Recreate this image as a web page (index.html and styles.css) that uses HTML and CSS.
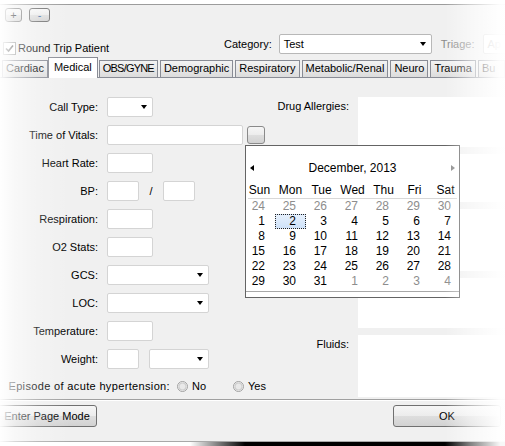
FILE: index.html
```html
<!DOCTYPE html>
<html lang="en">
<head>
    <meta charset="UTF-8">
    <meta name="viewport" content="width=device-width, initial-scale=1.0">
    <title>Medical</title>
    <link rel="stylesheet" href="styles.css">
</head>
<body>
    <div class="screen">
        <div class="window">
            <div class="toolbar">
                <button class="btn btn-plus">+</button>
                <button class="btn btn-minus">-</button>
            </div>

            <div class="header">
                <div class="roundtrip">
                    <span class="check">
                        <svg width="9" height="9" viewBox="0 0 9 9"><path d="M1 4.5 L3.5 7 L8 1.5" fill="none" stroke="#333" stroke-width="1.6"/></svg>
                    </span>
                    Round Trip Patient
                </div>
                <span class="lbl-cat">Category:</span>
                <div class="select select-cat">Test<span class="arrow"></span></div>
                <span class="lbl-triage">Triage:</span>
                <div class="select select-triage">Ap</div>
            </div>

            <div class="tabs">
                <div class="tab">Cardiac</div>
                <div class="tab active">Medical</div>
                <div class="tab tab-caps">OBS/GYNE</div>
                <div class="tab">Demographic</div>
                <div class="tab">Respiratory</div>
                <div class="tab">Metabolic/Renal</div>
                <div class="tab">Neuro</div>
                <div class="tab">Trauma</div>
                <div class="tab tab-last">Bu</div>
            </div>

            <div class="panel">
                <div class="form">
                    <span class="label">Call Type:</span>
                    <div class="select w46"><span class="arrow"></span></div>

                    <span class="label">Time of Vitals:</span>
                    <div class="pair">
                        <div class="field w136"></div>
                        <button class="btn btn-drop"></button>
                    </div>

                    <span class="label">Heart Rate:</span>
                    <div class="field w46"></div>

                    <span class="label">BP:</span>
                    <div class="pair">
                        <div class="field w32"></div>
                        <span class="slash">/</span>
                        <div class="field w32"></div>
                    </div>

                    <span class="label">Respiration:</span>
                    <div class="field w46"></div>

                    <span class="label">O2 Stats:</span>
                    <div class="field w46"></div>

                    <span class="label">GCS:</span>
                    <div class="select w102"><span class="arrow"></span></div>

                    <span class="label">LOC:</span>
                    <div class="select w102"><span class="arrow"></span></div>

                    <span class="label">Temperature:</span>
                    <div class="field w46"></div>

                    <span class="label">Weight:</span>
                    <div class="pair pair-weight">
                        <div class="field w32"></div>
                        <div class="select w60"><span class="arrow"></span></div>
                    </div>

                    <div class="episode">
                        <span class="episode-label">Episode of acute hypertension:</span>
                        <label class="opt"><span class="radio"></span>No</label>
                        <label class="opt"><span class="radio"></span>Yes</label>
                    </div>
                </div>

                <div class="notes">
                    <div class="note-row">
                        <span class="note-label">Drug Allergies:</span>
                        <div class="note-box h50"></div>
                    </div>
                    <div class="note-row">
                        <span class="note-label"></span>
                        <div class="note-box h48"></div>
                    </div>
                    <div class="note-row">
                        <span class="note-label"></span>
                        <div class="note-box h62"></div>
                    </div>
                    <div class="note-row">
                        <span class="note-label"></span>
                        <div class="note-box h50"></div>
                    </div>
                    <div class="note-row">
                        <span class="note-label">Fluids:</span>
                        <div class="note-box h62"></div>
                    </div>
                </div>
            </div>

            <div class="footer">
                <button class="btn btn-page">Enter Page Mode</button>
                <button class="btn btn-ok">OK</button>
            </div>
        </div>
        <div class="taskbar"></div>

        <!-- date picker dropped from Time of Vitals -->
        <div class="calendar">
            <div class="cal-head">
                <span class="cal-prev"></span>
                <span class="cal-title">December, 2013</span>
                <span class="cal-next"></span>
            </div>
            <div class="cal-grid cal-days">
                <span>Sun</span><span>Mon</span><span>Tue</span><span>Wed</span><span>Thu</span><span>Fri</span><span>Sat</span>
            </div>
            <div class="cal-rule"></div>
            <div class="cal-grid cal-dates">
                <span class="other">24</span><span class="other">25</span><span class="other">26</span><span class="other">27</span><span class="other">28</span><span class="other">29</span><span class="other">30</span>
                <span>1</span><span class="today">2</span><span>3</span><span>4</span><span>5</span><span>6</span><span>7</span>
                <span>8</span><span>9</span><span>10</span><span>11</span><span>12</span><span>13</span><span>14</span>
                <span>15</span><span>16</span><span>17</span><span>18</span><span>19</span><span>20</span><span>21</span>
                <span>22</span><span>23</span><span>24</span><span>25</span><span>26</span><span>27</span><span>28</span>
                <span>29</span><span>30</span><span>31</span><span class="other">1</span><span class="other">2</span><span class="other">3</span><span class="other">4</span>
            </div>
            <div class="cal-foot"></div>
        </div>

        <div class="fade fade-left"></div>
        <div class="fade fade-right"></div>
    </div>
</body>
</html>
```

FILE: styles.css
```css
*{
    margin: 0;
    padding: 0;
    box-sizing: border-box;
    font-family: "Liberation Sans", Arial, sans-serif;
}
body{
    background: #fff;
}
.screen{
    position: relative;
    width: 505px;
    height: 446px;
    overflow: hidden;
    font-size: 11px;
    color: #000;
}
.window{
    margin-top: 4px;
    height: 438px;
    display: flex;
    flex-direction: column;
    background: #f0f0f0;
    border-top: 1px solid #9c9c9c;
    border-bottom: 1px solid #a8a8a8;
}

/* buttons */
.btn{
    border: 1px solid #707070;
    border-radius: 3px;
    background: linear-gradient(#f6f6f6 0%, #ececec 50%, #dedede 51%, #d2d2d2 100%);
    font-size: 11px;
    color: #000;
}
.toolbar{
    display: flex;
    gap: 7px;
    padding: 3px 0 0 5px;
}
.btn-plus{
    width: 17px;
    height: 14px;
    line-height: 11px;
}
.btn-minus{
    width: 21px;
    height: 14px;
    line-height: 10px;
    color: #3d6fa8;
}

/* header */
.header{
    display: flex;
    align-items: center;
    height: 20px;
    margin-top: 12px;
}
.header > *{
    flex-shrink: 0;
}
.roundtrip{
    width: 221px;
    margin-left: 3px;
    display: flex;
    align-items: center;
    gap: 2px;
    padding-top: 8px;
}
.check{
    width: 13px;
    height: 13px;
    border: 1px solid #8e8f8f;
    background: #fff;
    display: flex;
    align-items: center;
    justify-content: center;
}
.lbl-cat{
    margin-right: 7px;
}
.lbl-triage{
    margin-left: 9px;
    margin-right: 8px;
    color: #8a8a8a;
}
.select{
    height: 20px;
    background: #fff;
    border: 1px solid #d4d4d4;
    border-radius: 2px;
    display: flex;
    align-items: center;
    justify-content: flex-end;
    padding-right: 5px;
}
.arrow{
    width: 0;
    height: 0;
    border-left: 3.5px solid transparent;
    border-right: 3.5px solid transparent;
    border-top: 4px solid #000;
}
.select-cat{
    width: 153px;
    justify-content: space-between;
    padding: 0 5px 0 4px;
    border-color: #b8b8b8;
}
.select-triage{
    width: 80px;
    justify-content: flex-start;
    padding-left: 4px;
    color: #aaa;
}

/* tabs */
.tabs{
    display: flex;
    align-items: flex-end;
    height: 21px;
    margin-top: 3px;
    padding-left: 2px;
    border-bottom: 1px solid #898c95;
}
.tab{
    height: 17px;
    line-height: 15px;
    padding: 0 3px;
    margin-right: 2px;
    border: 1px solid #898c95;
    border-bottom: none;
    background: linear-gradient(#f3f3f3, #dcdcdc);
    white-space: nowrap;
}
.tab:first-child{
    margin-right: 0;
}
.tab.active{
    height: 21px;
    line-height: 18px;
    padding: 0 5px;
    margin-right: 1px;
    margin-bottom: -1px;
    background: #fff;
}
.tab-caps{
    letter-spacing: -0.8px;
}
.tab-last{
    flex: 1;
    margin-right: 0;
}

/* tab page */
.panel{
    flex: 1;
    display: flex;
    padding-top: 19px;
}
.form{
    width: 270px;
    display: grid;
    grid-template-columns: 98px auto;
    column-gap: 9px;
    row-gap: 8px;
    align-items: center;
    align-content: start;
}
.label{
    text-align: right;
    white-space: nowrap;
}
.field{
    height: 20px;
    background: #fff;
    border: 1px solid #d4d4d4;
    border-radius: 2px;
}
.w32{ width: 32px; }
.w46{ width: 46px; }
.w60{ width: 60px; }
.w102{ width: 102px; }
.w136{ width: 136px; }
.pair{
    display: flex;
    align-items: center;
}
.btn-drop{
    width: 18px;
    height: 18px;
    margin-left: 4px;
    border-color: #8a8a8a;
}
.slash{
    width: 24px;
    text-align: center;
}
.pair-weight{
    gap: 10px;
}
.episode{
    grid-column: 1 / -1;
    display: flex;
    align-items: center;
    height: 18px;
}
.episode-label{
    width: 170px;
    text-align: right;
    white-space: nowrap;
    letter-spacing: 0.35px;
}
.opt{
    width: 56px;
    display: flex;
    align-items: center;
    gap: 4px;
}
.episode-label + .opt{
    margin-left: 7px;
}
.radio{
    width: 11px;
    height: 11px;
    border-radius: 50%;
    border: 1px solid #a2a2a2;
    background: radial-gradient(circle, #e9e9e9 0 2.5px, #c9c9c9 3.5px, #f5f5f5 4.5px);
}
.notes{
    flex: 1;
    display: flex;
    flex-direction: column;
    gap: 7px;
}
.note-row{
    display: flex;
    gap: 9px;
}
.note-label{
    width: 79px;
    flex-shrink: 0;
    text-align: right;
    padding-top: 3px;
    white-space: nowrap;
}
.note-box{
    flex: 1;
    background: #fff;
}
.h48{ height: 48px; }
.h50{ height: 50px; }
.h62{ height: 62px; }

/* bottom buttons */
.footer{
    height: 42px;
    display: flex;
    justify-content: space-between;
    align-items: flex-start;
    padding: 5px 4px 0 0;
    border-top: 1px solid #a0a0a0;
    box-shadow: inset 0 1px #fff;
}
.btn-page{
    width: 100px;
    height: 22px;
    margin-left: -3px;
}
.btn-ok{
    width: 108px;
    height: 22px;
}
.taskbar{
    height: 4px;
    background: linear-gradient(to right, rgba(0,0,0,0) 190px, #000 245px);
}

/* date picker */
.calendar{
    position: absolute;
    left: 245px;
    top: 145px;
    width: 215px;
    height: 153px;
    background: #fff;
    border: 1px solid #646464;
    font-size: 12px;
    z-index: 2;
}
.cal-head{
    display: flex;
    align-items: center;
    justify-content: space-between;
    height: 18px;
    margin-top: 13px;
    padding: 0 4px;
}
.cal-prev{
    width: 0;
    height: 0;
    border-top: 3.5px solid transparent;
    border-bottom: 3.5px solid transparent;
    border-right: 4px solid #000;
}
.cal-next{
    width: 0;
    height: 0;
    border-top: 3.5px solid transparent;
    border-bottom: 3.5px solid transparent;
    border-left: 4px solid #8a8a8a;
}
.cal-grid{
    display: grid;
    grid-template-columns: repeat(7, 31px);
    margin-left: -2px;
}
.cal-days{
    margin-top: 6px;
    height: 15px;
    line-height: 15px;
    text-align: center;
}
.cal-rule{
    height: 1px;
    margin: 0 2px;
    background: #d8d8d8;
}
.cal-dates span{
    height: 15px;
    line-height: 15px;
    text-align: right;
    padding-right: 10px;
}
.cal-dates .other{
    color: #8d8d8d;
}
.cal-dates .today{
    line-height: 13px;
    padding-right: 9px;
    background: linear-gradient(#e6f0fc, #cfe2f9);
    border: 1px dotted #222;
}
.cal-foot{
    height: 1px;
    margin-top: 2px;
    background: #a8a8a8;
}

/* screenshot edge fades */
.fade{
    position: absolute;
    top: 0;
    bottom: 0;
    pointer-events: none;
    z-index: 3;
}
.fade-left{
    left: 0;
    width: 70px;
    background: linear-gradient(to right, rgba(255,255,255,0.95) 0, rgba(255,255,255,0.55) 15px, rgba(255,255,255,0.2) 38px, rgba(255,255,255,0) 70px);
}
.fade-right{
    right: 0;
    width: 60px;
    background: linear-gradient(to right, rgba(255,255,255,0) 0, rgba(255,255,255,0.5) 25px, rgba(255,255,255,0.97) 55px);
}
```
